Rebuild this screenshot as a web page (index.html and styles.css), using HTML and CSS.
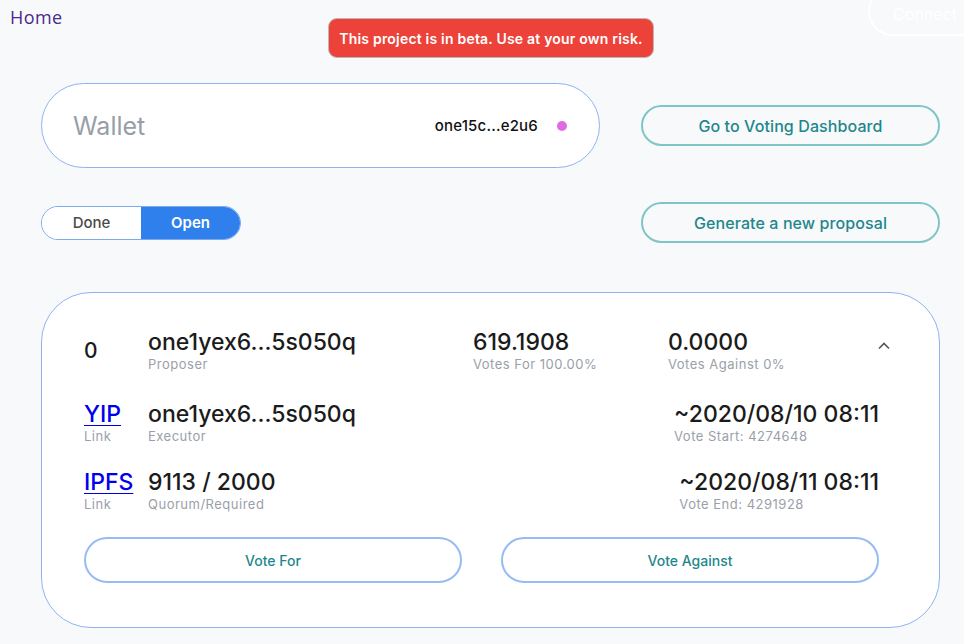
FILE: index.html
```html
<!DOCTYPE html>
<html lang="en">
<head>
<meta charset="utf-8">
<title>Voting</title>
<link rel="stylesheet" href="styles.css">
</head>
<body>
<header class="topbar">
  <a class="home" href="#">Home</a>
  <div class="beta">This project is in beta. Use at your own risk.</div>
  <button class="connect">Connect</button>
</header>
<main class="main">
  <section class="row row-wallet">
    <div class="wallet">
      <span class="wallet-title">Wallet</span>
      <span class="wallet-addr">one15c...e2u6</span>
      <span class="wallet-dot"></span>
    </div>
    <button class="teal-btn">Go to Voting Dashboard</button>
  </section>
  <section class="row row-tabs">
    <div class="tabs">
      <button class="tab">Done</button>
      <button class="tab tab-active">Open</button>
    </div>
    <button class="teal-btn">Generate a new proposal</button>
  </section>
  <section class="card">
    <div class="p-head">
      <div class="p-id">0</div>
      <div class="cell"><div class="val">one1yex6...5s050q</div><div class="lbl">Proposer</div></div>
      <div class="cell"><div class="val">619.1908</div><div class="lbl">Votes For 100.00%</div></div>
      <div class="cell"><div class="val">0.0000</div><div class="lbl">Votes Against 0%</div></div>
      <svg class="chev" width="14" height="14" viewBox="0 0 14 14"><path d="M2 9.5 L7 4.5 L12 9.5" fill="none" stroke="#555" stroke-width="1.6"/></svg>
    </div>
    <div class="p-row">
      <div class="cell"><a class="val link" href="#">YIP</a><div class="lbl">Link</div></div>
      <div class="cell"><div class="val">one1yex6...5s050q</div><div class="lbl">Executor</div></div>
      <div class="cell date"><div class="val">~2020/08/10 08:11</div><div class="lbl">Vote Start: 4274648</div></div>
    </div>
    <div class="p-row">
      <div class="cell"><a class="val link" href="#">IPFS</a><div class="lbl">Link</div></div>
      <div class="cell"><div class="val">9113 / 2000</div><div class="lbl">Quorum/Required</div></div>
      <div class="cell date"><div class="val">~2020/08/11 08:11</div><div class="lbl">Vote End: 4291928</div></div>
    </div>
    <div class="votes">
      <button class="vote-btn">Vote For</button>
      <button class="vote-btn">Vote Against</button>
    </div>
  </section>
</main>
</body>
</html>
```
FILE: styles.css
```css
* { box-sizing: border-box; }
html, body { margin: 0; padding: 0; }
body {
  background: #f8f9fb;
  font-family: Inter, "Noto Sans", sans-serif;
  color: #1a1a1a;
  width: 964px;
  height: 644px;
  overflow: hidden;
  position: relative;
}
button { font-family: inherit; cursor: pointer; }

.topbar {
  height: 60px;
  padding: 5px 0 0 10px;
}
.home {
  font-family: "Open Sans", sans-serif;
  font-size: 18px;
  color: #4a2a8c;
  text-decoration: none;
  letter-spacing: 0.4px;
}
.beta {
  position: absolute;
  left: 328px;
  top: 18px;
  width: 326px;
  height: 40px;
  background: #ec4239;
  border: 1px solid #b9b9b9;
  border-radius: 9px;
  color: #fff;
  font-size: 14px;
  font-weight: 600;
  letter-spacing: 0.2px;
  display: flex;
  align-items: center;
  justify-content: center;
}
.connect {
  position: absolute;
  left: 868px;
  top: -14px;
  width: 140px;
  height: 50px;
  border: 2px solid #fff;
  border-radius: 25px;
  background: transparent;
  color: #fff;
  font-size: 16px;
  text-align: left;
  padding: 5px 0 0 23px;
}

.main {
  width: 899px;
  margin-left: 41px;
  margin-top: 23px;
}
.row {
  display: flex;
  align-items: center;
  justify-content: space-between;
}
.wallet {
  width: 559px;
  height: 85px;
  background: #fff;
  border: 1px solid #8fb3f2;
  border-radius: 43px;
  display: flex;
  align-items: center;
  padding: 0 32px 0 31px;
}
.wallet-title {
  font-size: 25px;
  color: #979ea8;
  flex: 1;
}
.wallet-addr {
  font-size: 15px;
  font-weight: 500;
  color: #111;
  letter-spacing: 0.2px;
}
.wallet-dot {
  width: 10px;
  height: 10px;
  border-radius: 50%;
  background: #e06ae3;
  margin-left: 19px;
}
.teal-btn {
  width: 299px;
  height: 41px;
  border: 2px solid #80c5c6;
  border-radius: 21px;
  background: transparent;
  color: #1e878b;
  font-size: 16px;
  font-weight: 500;
  letter-spacing: 0.1px;
}
.row-tabs { margin-top: 34px; }
.tabs {
  display: flex;
  width: 200px;
  height: 34px;
  border: 1px solid #7da9ef;
  border-radius: 17px;
  overflow: hidden;
  background: #fff;
}
.tab {
  flex: 1;
  border: 0;
  background: #fff;
  color: #4a4a4a;
  font-size: 15px;
  font-weight: 500;
}
.tab-active {
  background: #2f80ed;
  color: #fff;
  font-weight: 600;
}

.card {
  margin-top: 49px;
  height: 336px;
  background: #fff;
  border: 1px solid #8fb3f2;
  border-radius: 50px;
  padding: 36px 60px 0 42px;
}
.val {
  display: block;
  font-size: 23px;
  line-height: 26px;
  font-weight: 500;
  color: #1b1b1b;
}
.lbl {
  font-size: 13px;
  line-height: 16px;
  color: #9aa0a8;
  letter-spacing: 0.5px;
  margin-top: 1px;
}
.link {
  color: #0000ee;
  text-decoration: underline;
  text-decoration-thickness: 1px;
  text-underline-offset: 3px;
}
.p-head {
  display: grid;
  grid-template-columns: 64px 325px 195px 1fr auto;
  align-items: center;
  margin-right: -12px;
}
.p-id {
  font-size: 21px;
  font-weight: 500;
}
.chev { margin-top: -10px; }
.p-row {
  display: grid;
  grid-template-columns: 64px 1fr auto;
  margin-top: 29px;
}
.p-row + .p-row { margin-top: 25px; }
.votes {
  display: flex;
  justify-content: space-between;
  margin-top: 25px;
}
.vote-btn {
  width: 378px;
  height: 46px;
  border: 2px solid #97bbf4;
  border-radius: 23px;
  background: #fff;
  color: #1e878b;
  font-size: 14px;
  font-weight: 500;
}
```
